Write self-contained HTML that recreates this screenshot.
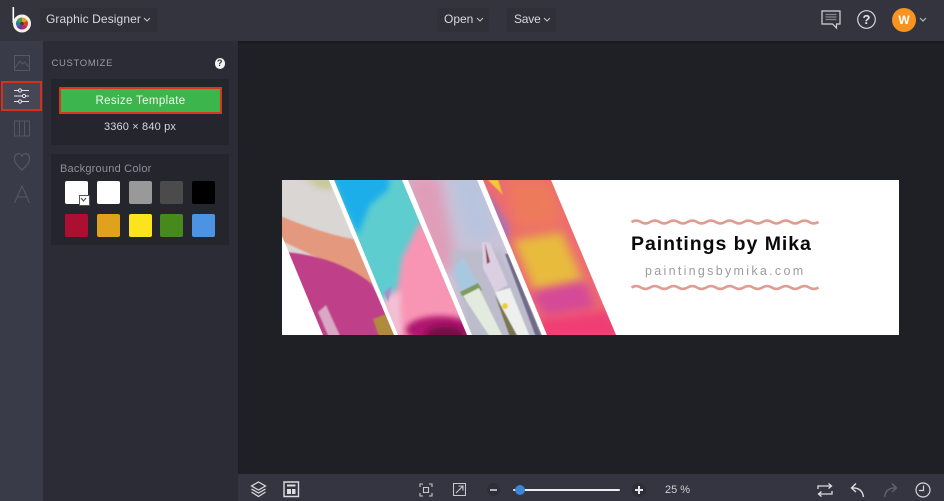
<!DOCTYPE html>
<html><head><meta charset="utf-8"><style>
html,body{margin:0;padding:0;width:944px;height:501px;overflow:hidden;background:#1f2025;font-family:"Liberation Sans",sans-serif}
.a{position:absolute}
.t{position:absolute;white-space:nowrap}
.sw{position:absolute;width:23px;height:23px;border-radius:2px}
</style></head><body>
<div class="a" style="left:0;top:0;width:944px;height:41px;background:#33343d;box-shadow:0 1px 2px #15161a"></div>
<div class="a" style="left:0;top:41px;width:43px;height:460px;background:#393b48"></div>
<div class="a" style="left:43px;top:41px;width:195px;height:460px;background:#2b2c35"></div>
<div class="a" style="top:474px;height:27px;background:#343540;left:238px;width:706px"></div>

<!-- top bar -->
<svg class="a" style="left:10px;top:5px" width="24" height="30" viewBox="0 0 24 30">
<path d="M3.300 2V18" stroke="#fff" stroke-width="1.600" fill="none"/>
<circle cx="12" cy="18.500" r="9" fill="#f4f1ea"/>
<path d="M12 18.500V12.500A6 6 0 0 1 17.200 15.500Z" fill="#e8a020"/>
<path d="M12 18.500L17.200 15.500A6 6 0 0 1 17.200 21.500Z" fill="#d8402c"/>
<path d="M12 18.500L17.200 21.500A6 6 0 0 1 12 24.500Z" fill="#b02a6c"/>
<path d="M12 18.500V24.500A6 6 0 0 1 6.800 21.500Z" fill="#6a3a94"/>
<path d="M12 18.500L6.800 21.500A6 6 0 0 1 6.800 15.500Z" fill="#2a78a0"/>
<path d="M12 18.500L6.800 15.500A6 6 0 0 1 12 12.500Z" fill="#4a9a50"/>
<circle cx="12" cy="18.500" r="1.800" fill="#4a3a30"/>
</svg>
<div class="a" style="left:40px;top:8px;width:117px;height:24px;background:#2f3038;border-radius:2px"></div>
<div class="t" style="left:46px;top:12px;font-size:12px;line-height:15px;color:#d9dade;letter-spacing:.1px">Graphic Designer</div>
<svg class="a" style="left:143px;top:17px" width="8" height="6"><path d="M1 1L4 4L7 1" fill="none" stroke="#c8c9ce" stroke-width="1"/></svg>
<div class="a" style="left:437px;top:8px;width:52px;height:24px;background:#2f3038;border-radius:2px"></div>
<div class="t" style="left:444px;top:12px;font-size:12px;line-height:15px;color:#d9dade">Open</div>
<svg class="a" style="left:476px;top:17px" width="8" height="6"><path d="M1 1L4 4L7 1" fill="none" stroke="#c8c9ce" stroke-width="1"/></svg>
<div class="a" style="left:507px;top:8px;width:49px;height:24px;background:#2f3038;border-radius:2px"></div>
<div class="t" style="left:514px;top:12px;font-size:12px;line-height:15px;color:#d9dade;letter-spacing:-.2px">Save</div>
<svg class="a" style="left:543px;top:17px" width="8" height="6"><path d="M1 1L4 4L7 1" fill="none" stroke="#c8c9ce" stroke-width="1"/></svg>
<svg class="a" style="left:820px;top:9px" width="22" height="21" viewBox="0 0 22 21">
<path d="M2 2H20V15H16.500V19L12.500 15H2Z" fill="none" stroke="#d4d5d9" stroke-width="1.200"/>
<path d="M5.500 5.500H16.500M5.500 8H16.500M5.500 10.500H16.500" stroke="#85868c" stroke-width="1.200"/>
</svg>
<svg class="a" style="left:856px;top:9px" width="21" height="21"><circle cx="10.500" cy="10.500" r="8.800" fill="none" stroke="#d4d5d9" stroke-width="1.200"/></svg>
<div class="t" style="left:856px;top:12px;width:21px;text-align:center;font-size:13px;line-height:15px;font-weight:bold;color:#e4e5e8">?</div>
<div class="a" style="left:892px;top:8px;width:24px;height:24px;border-radius:50%;background:#f7931e"></div>
<div class="t" style="left:892px;top:13px;width:24px;text-align:center;font-size:12px;line-height:14px;font-weight:bold;color:#fff">W</div>
<svg class="a" style="left:919px;top:17px" width="8" height="6"><path d="M1 1L4 4L7 1" fill="none" stroke="#b8b9be" stroke-width="1.200"/></svg>

<!-- left rail -->
<div class="a" style="left:1px;top:81px;width:37px;height:26px;background:#454754;border:2px solid #d5301c"></div>
<svg class="a" style="left:13px;top:54px" width="18" height="150" viewBox="0 0 18 150" fill="none" stroke="#555764" stroke-width="1">
<path d="M1.500 1.500H16.500V16.500H1.500Z"/><path d="M2 14L7 7L9.500 10L11.500 8L16 13"/>
<path d="M1.500 67H16.500V82H1.500ZM6.500 67V82M11.500 67V82"/>
<path d="M9 116C5 112 1.500 109 1.500 105C1.500 99 7 98 9 102C11 98 16.500 99 16.500 105C16.500 109 13 112 9 116Z" stroke-width="1.200"/>
<path d="M1.500 149L9 132L16.500 149M4.500 143H13.500" stroke-width="1.100"/>
</svg>
<svg class="a" style="left:14px;top:88px" width="17" height="16" fill="none" stroke="#e2e3e6" stroke-width="1">
<path d="M0 2.500H15M0 8H15M0 13.500H15"/>
<circle cx="6" cy="2.500" r="1.600" fill="#454754"/><circle cx="10" cy="8" r="1.600" fill="#454754"/><circle cx="6" cy="13.500" r="1.600" fill="#454754"/>
</svg>

<!-- panel -->
<div class="t" style="left:51.500px;top:58px;font-size:9.500px;line-height:12px;color:#9a9ba4;letter-spacing:.65px">CUSTOMIZE</div>
<div class="a" style="left:214.500px;top:58px;width:10.500px;height:10.500px;border-radius:50%;background:#f2f2f3"></div>
<div class="t" style="left:214.500px;top:58px;width:10.500px;text-align:center;font-size:9px;line-height:10.500px;font-weight:bold;color:#2b2c35">?</div>
<div class="a" style="left:51px;top:79px;width:178px;height:66px;background:#24252d"></div>
<div class="a" style="left:59px;top:87px;width:159px;height:23px;background:#3cb54d;border:2px solid #d5381c"></div>
<div class="t" style="left:59px;top:94px;width:163px;text-align:center;font-size:11.500px;line-height:14px;color:#f0f6f0;letter-spacing:.35px">Resize Template</div>
<div class="t" style="left:51px;top:120px;width:178px;text-align:center;font-size:11px;line-height:14px;color:#d8d9dc;letter-spacing:.15px">3360 × 840 px</div>
<div class="a" style="left:51px;top:154px;width:178px;height:91px;background:#24252d"></div>
<div class="t" style="left:60px;top:162px;font-size:11px;line-height:14px;color:#8e8f98;letter-spacing:.22px">Background Color</div>
<div class="sw" style="left:65px;top:181px;background:#fff"></div>
<div class="a" style="left:79px;top:195px;width:9px;height:9px;background:#fff;border:0.500px solid #555"></div>
<svg class="a" style="left:80px;top:197px" width="7" height="6"><path d="M1 1L3.500 4L6 1" fill="none" stroke="#444" stroke-width="1"/></svg>
<div class="sw" style="left:97px;top:181px;background:#fff"></div>
<div class="sw" style="left:129px;top:181px;background:#999"></div>
<div class="sw" style="left:160px;top:181px;background:#4b4b4b"></div>
<div class="sw" style="left:192px;top:181px;background:#000"></div>
<div class="sw" style="left:65px;top:214px;background:#ad0f30"></div>
<div class="sw" style="left:97px;top:214px;background:#e0a11c"></div>
<div class="sw" style="left:129px;top:214px;background:#fbe41d"></div>
<div class="sw" style="left:160px;top:214px;background:#46891d"></div>
<div class="sw" style="left:192px;top:214px;background:#4c93e4"></div>

<!-- banner -->
<svg class="a" style="left:282px;top:180px" width="617" height="155" viewBox="282 180 617 155">
<defs>
<filter id="b3" x="-40%" y="-40%" width="180%" height="180%"><feGaussianBlur stdDeviation="3"/></filter>
<filter id="b5" x="-50%" y="-50%" width="200%" height="200%"><feGaussianBlur stdDeviation="5"/></filter>
<filter id="b6" x="-60%" y="-60%" width="220%" height="220%"><feGaussianBlur stdDeviation="7"/></filter>
<filter id="b1" x="-20%" y="-20%" width="140%" height="140%"><feGaussianBlur stdDeviation="0.700"/></filter>
<filter id="b05" x="-20%" y="-20%" width="140%" height="140%"><feGaussianBlur stdDeviation="0.400"/></filter>
<clipPath id="s1"><polygon points="282,180 329,180 394,335 323,335 282,236"/></clipPath>
<clipPath id="s2"><polygon points="334,180 402,180 467,335 398,335"/></clipPath>
<clipPath id="s3"><polygon points="408,180 477,180 542,335 472,335"/></clipPath>
<clipPath id="s4"><polygon points="483,180 551,180 616,335 547,335"/></clipPath>
</defs>
<rect x="282" y="180" width="617" height="155" fill="#fff"/>
<g clip-path="url(#s1)">
<rect x="282" y="180" width="112" height="155" fill="#d9d6d4"/>
<path d="M302 176L335 176L332 190L318 188Z" fill="#c8c99a" filter="url(#b3)"/>
<path d="M270 212C305 226 325 234 358 240L385 290L280 240Z" fill="#e4987e" filter="url(#b1)"/>
<path d="M285 252C310 254 345 262 372 284L400 340H320Z" fill="#bf3f88" filter="url(#b1)"/>
<path d="M318 312L326 305L342 340H330Z" fill="#d9a8c4" filter="url(#b1)"/>
<path d="M373 319L386 314L396 340H380Z" fill="#b08a3c" filter="url(#b1)"/>
</g>
<g clip-path="url(#s2)">
<rect x="330" y="175" width="140" height="165" fill="#5ecdd0"/>
<path d="M332 176H390L388 190L370 205L358 235L345 210Z" fill="#1daeea" filter="url(#b3)"/>
<path d="M420 222L402 258L397 290L385 300L395 345H480L440 235Z" fill="#f895b5" filter="url(#b3)"/>
<path d="M383 300L400 290L402 335H392Z" fill="#f2c0d4" filter="url(#b3)"/>
<path d="M384 292L392 286L388 302Z" fill="#a890d0" filter="url(#b1)"/>
<ellipse cx="440" cy="330" rx="34" ry="14" fill="#b01870" filter="url(#b3)"/>
<ellipse cx="445" cy="335" rx="20" ry="10" fill="#7a0c48" filter="url(#b3)"/>
</g>
<g clip-path="url(#s3)">
<rect x="405" y="175" width="145" height="165" fill="#c9c3d8"/>
<path d="M402 175H440L458 270H430Z" fill="#e09cb8" filter="url(#b6)"/>
<path d="M450 175H485L495 240L465 240Z" fill="#b8c4de" filter="url(#b6)"/>
<path d="M450 250H500L545 340H470Z" fill="#bcbccc" filter="url(#b3)"/>
<g filter="url(#b05)">
<path d="M453 270L463 257L473 275L480 285L462 292Z" fill="#a8c8e0"/>
<path d="M460 292L478 283L482 290L465 300Z" fill="#7e9a5c"/>
<path d="M463 296L479 288L503 337H490Z" fill="#e2ebdd"/>
<path d="M482 242L490 243L508 285L495 292L483 268Z" fill="#dccfe2"/>
<path d="M485 243L490 262L487 264Z" fill="#8e3f55"/>
<path d="M495 292L510 288L530 337H515Z" fill="#eef0ee"/>
<path d="M495 295L518 337H510Z" fill="#7a7450"/>
<circle cx="505" cy="306" r="3" fill="#e8d030"/>
<path d="M505 254L508 254L542 337H536Z" fill="#6e6a88"/>
</g>
</g>
<g clip-path="url(#s4)">
<rect x="480" y="175" width="140" height="165" fill="#ec6a72"/>
<path d="M488 180L498 180L503 195Z" fill="#eed030" filter="url(#b05)"/>
<path d="M487 190L510 225L508 250L490 210Z" fill="#b070b0" filter="url(#b3)"/>
<path d="M505 180H552L565 225L515 230Z" fill="#ee7a5c" filter="url(#b6)"/>
<path d="M513 240L562 232L585 285L535 292Z" fill="#e8bb3c" filter="url(#b5)"/>
<path d="M530 292L585 280L595 308L545 316Z" fill="#d54a98" filter="url(#b5)"/>
<path d="M535 320L610 310L625 340H545Z" fill="#ef3e74" filter="url(#b5)"/>
</g>
<polygon points="329,180 334,180 398,335 394,335" fill="#fff"/>
<path d="M631.500 222q4.700-2.800 9.350 0t9.350 0t9.350 0t9.350 0t9.350 0t9.350 0t9.350 0t9.350 0t9.350 0t9.350 0t9.350 0t9.350 0t9.350 0t9.350 0t9.350 0t9.350 0t9.350 0t9.350 0t9.350 0t9.350 0" fill="none" stroke="#e09b92" stroke-width="2.600"/>
<path d="M631.500 287.500q4.700-2.800 9.350 0t9.350 0t9.350 0t9.350 0t9.350 0t9.350 0t9.350 0t9.350 0t9.350 0t9.350 0t9.350 0t9.350 0t9.350 0t9.350 0t9.350 0t9.350 0t9.350 0t9.350 0t9.350 0t9.350 0" fill="none" stroke="#e09b92" stroke-width="2.600"/>
<text x="631" y="250" font-family="Liberation Sans" font-weight="bold" font-size="19.500" letter-spacing="0.950" fill="#0a0a0a">Paintings by Mika</text>
<text x="645" y="275" font-family="Liberation Sans" font-size="12.500" letter-spacing="2.300" fill="#9d9d9d">paintingsbymika.com</text>
</svg>

<!-- bottom bar -->
<svg class="a" style="left:250px;top:481px" width="18" height="17" fill="none" stroke="#dcdde0" stroke-width="1.200">
<path d="M8.500 1L15.500 5L8.500 9L1.500 5Z"/><path d="M1.500 8L8.500 12L15.500 8"/><path d="M1.500 11L8.500 15.500L15.500 11"/>
</svg>
<svg class="a" style="left:283px;top:481px" width="17" height="17" fill="none" stroke="#dcdde0">
<path d="M1 1H15.500V15.500H1Z" stroke-width="1.400"/><path d="M4 4.500H12.500" stroke-width="2"/>
<path d="M4 8H8V13H4ZM9 8H12.500V13H9Z" fill="#dcdde0" stroke="none"/>
</svg>
<svg class="a" style="left:419px;top:483px" width="14" height="14" fill="none" stroke="#c8c9ce" stroke-width="1.100">
<path d="M1 4V1H4M10 1H13V4M13 10V13H10M4 13H1V10"/><path d="M4.500 4.500H9.500V9.500H4.500Z"/>
</svg>
<svg class="a" style="left:453px;top:483px" width="13" height="13" fill="none" stroke="#c8c9ce" stroke-width="1.100">
<path d="M.5.500H12.500V12.500H.5Z"/><path d="M3 10L10 3M5.500 3H10V7.500"/>
</svg>
<div class="a" style="left:487px;top:483px;width:13px;height:13px;border-radius:50%;background:#2d2e38"></div>
<div class="a" style="left:490px;top:489px;width:7px;height:1.500px;background:#b4b5ba"></div>
<div class="a" style="left:513px;top:489px;width:107px;height:2px;background:#eceded;border-radius:1px"></div>
<div class="a" style="left:515px;top:485px;width:10px;height:10px;border-radius:50%;background:#3d85d8"></div>
<div class="a" style="left:632px;top:483px;width:14px;height:14px;border-radius:50%;background:#2d2e38"></div>
<div class="a" style="left:635px;top:489px;width:8px;height:1.500px;background:#e4e5e8"></div>
<div class="a" style="left:638.300px;top:486px;width:1.500px;height:8px;background:#e4e5e8"></div>
<div class="t" style="left:665px;top:484px;font-size:11px;line-height:13px;color:#d0d1d5">25 %</div>
<svg class="a" style="left:817px;top:482px" width="16" height="16" fill="none" stroke="#dcdde0" stroke-width="1.300">
<path d="M1 7V4H14M11.500 1.500L14.500 4L11.500 6.500"/><path d="M15 9V12H2M4.500 9.500L1.500 12L4.500 14.500"/>
</svg>
<svg class="a" style="left:850px;top:482px" width="15" height="16" fill="none" stroke="#dcdde0" stroke-width="1.400">
<path d="M6 1.500L1.500 6L6 10"/><path d="M1.500 6C8 5.500 12.500 8 13.500 15"/>
</svg>
<svg class="a" style="left:883px;top:482px" width="15" height="16" fill="none" stroke="#62636b" stroke-width="1.400">
<path d="M9 1.500L13.500 6L9 10"/><path d="M13.500 6C7 5.500 2.500 8 1.500 15"/>
</svg>
<svg class="a" style="left:915px;top:482px" width="16" height="16" fill="none" stroke="#d4d5d9" stroke-width="1.200">
<circle cx="8" cy="8" r="7"/><path d="M8.500 3.500V8.500H4"/>
</svg>
</body></html>
